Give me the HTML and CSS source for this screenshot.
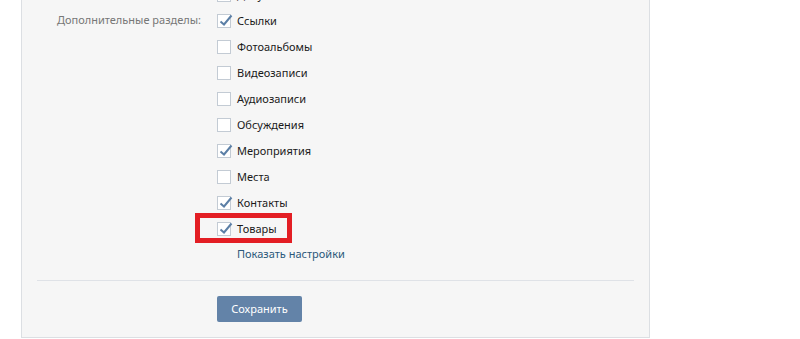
FILE: index.html
```html
<!DOCTYPE html>
<html>
<head>
<meta name="viewport" content="width=device-width, initial-scale=1">
<link rel="stylesheet" href="styles.css">
</head>
<body>

<div class="panel">

<div class="frow top">
<div class="flabel"></div>
<div class="fopts">
<label class="chk"><span class="box"></span><span class="txt">Документы</span></label>
</div>
</div>

<div class="frow">
<div class="flabel">Дополнительные разделы:</div>
<div class="fopts">
<label class="chk"><span class="box"><svg viewBox="0 0 14 14"><polyline points="2.5,7.5 6,10.5 13.5,1.5"/></svg></span><span class="txt">Ссылки</span></label>
<label class="chk"><span class="box"></span><span class="txt">Фотоальбомы</span></label>
<label class="chk"><span class="box"></span><span class="txt">Видеозаписи</span></label>
<label class="chk"><span class="box"></span><span class="txt">Аудиозаписи</span></label>
<label class="chk"><span class="box"></span><span class="txt">Обсуждения</span></label>
<label class="chk"><span class="box"><svg viewBox="0 0 14 14"><polyline points="2.5,7.5 6,10.5 13.5,1.5"/></svg></span><span class="txt">Мероприятия</span></label>
<label class="chk"><span class="box"></span><span class="txt">Места</span></label>
<label class="chk"><span class="box"><svg viewBox="0 0 14 14"><polyline points="2.5,7.5 6,10.5 13.5,1.5"/></svg></span><span class="txt">Контакты</span></label>
<label class="chk mark"><span class="box"><svg viewBox="0 0 14 14"><polyline points="2.5,7.5 6,10.5 13.5,1.5"/></svg></span><span class="txt">Товары</span></label>
<a class="more" href="#">Показать настройки</a>
</div>
</div>

<hr class="sep">

<div class="frow">
<div class="flabel"></div>
<div class="fopts">
<button class="bbtn">Сохранить</button>
</div>
</div>

</div>

</body>
</html>
```

FILE: styles.css
```css
body{margin:0;background-color:#fff;font-family:"Noto Sans",sans-serif;font-size:11px;color:#1a1a1a;}
.panel{box-sizing:border-box;margin:-18px 0 0 21px;width:629px;background-color:#f6f6f6;border:1px solid #dcdfe3;border-top:none;padding:0 15px 15px 15px;}
.frow{display:flex;gap:16px;}
.flabel{width:164px;flex:none;text-align:right;color:#777;line-height:24px;}
.fopts{display:flex;flex-direction:column;}
.chk{display:flex;align-items:center;gap:6px;height:26px;}
.chk .txt{margin-bottom:2px;}
.box{width:12px;height:12px;flex:none;border:1px solid #c3cbd4;background-color:#fff;position:relative;}
.box svg{position:absolute;left:0;top:-1px;width:14px;height:14px;overflow:visible;fill:none;stroke:#5b7fa6;stroke-width:2;}
.mark{position:relative;}
.mark::after{content:"";position:absolute;left:-22px;top:-3px;width:87px;height:20px;border:5px solid #e31e24;}
.more{display:block;margin-left:20px;line-height:24px;padding-bottom:2px;color:#2b587a;text-decoration:none;}
.sep{margin:12px 0 15px 0;border:none;border-top:1px solid #dfe2e7;}
.bbtn{width:85px;height:26px;border:none;border-radius:2px;background-color:#6383a8;color:#fff;font-family:inherit;font-size:11px;padding:0 0 1px 0;}
```
